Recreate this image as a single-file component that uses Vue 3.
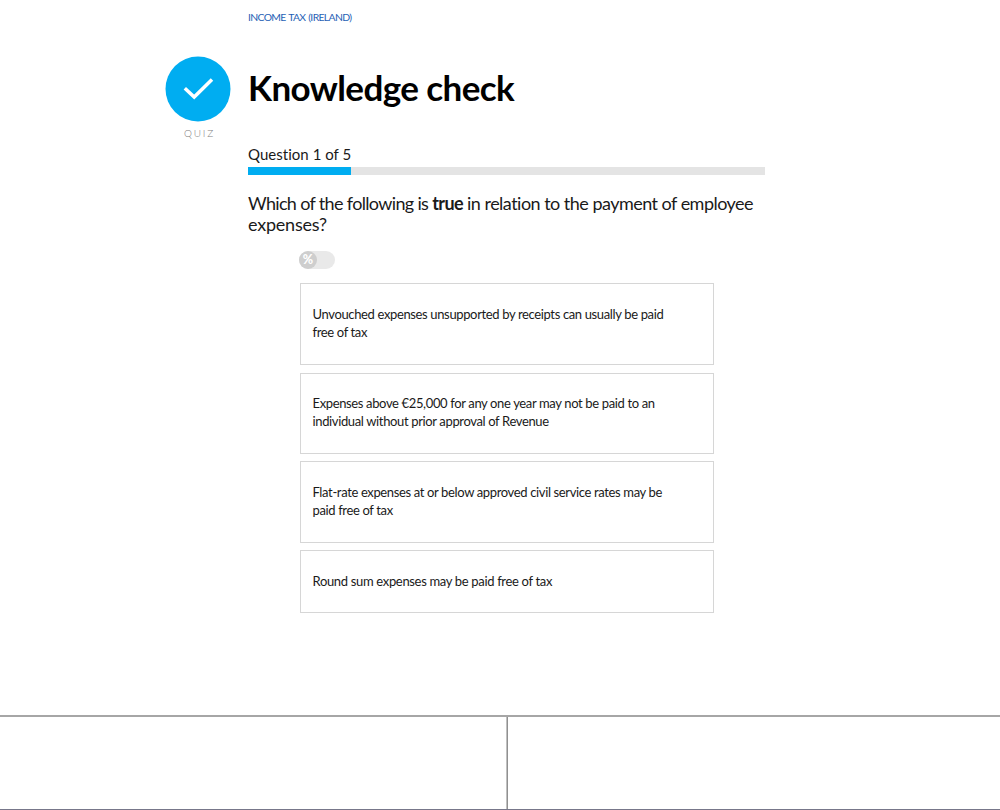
<script setup>
const course = 'INCOME TAX (IRELAND)'
const current = 1
const total = 5
const answers = [
  { id: 'a', lines: ['Unvouched expenses unsupported by receipts can usually be paid', 'free of tax'] },
  { id: 'b', lines: ['Expenses above €25,000 for any one year may not be paid to an', 'individual without prior approval of Revenue'] },
  { id: 'c', lines: ['Flat-rate expenses at or below approved civil service rates may be', 'paid free of tax'] },
  { id: 'd', lines: ['Round sum expenses may be paid free of tax'] }
]
</script>

<template>
  <div class="page">
    <main class="quiz">
      <aside class="badge">
        <svg class="badge-icon" viewBox="0 0 66 66" width="66" height="66">
          <circle cx="33" cy="33" r="32.5" fill="#00adf1" />
          <path d="M19.8 32.2 L29.2 41 L47 23.4" fill="none" stroke="#fff" stroke-width="3.5" />
        </svg>
        <span class="badge-label">QUIZ</span>
      </aside>
      <section class="content">
        <a class="course">{{ course }}</a>
        <h1 class="title">Knowledge check</h1>
        <div class="counter">Question {{ current }} of {{ total }}</div>
        <div class="progress">
          <div class="progress-fill" :style="{ width: (current / total) * 100 + '%' }"></div>
        </div>
        <p class="question">
          <span class="line"><span class="lead">Which of the following is </span><b>true</b> in relation to the payment of employee</span>
          <span class="line last">expenses?</span>
        </p>
        <div class="toggle"><span class="knob">%</span></div>
        <div class="answers">
          <div v-for="a in answers" :key="a.id" class="answer" :class="'answer-' + a.id">
            <span v-for="(l, i) in a.lines" :key="i" class="line">{{ l }}</span>
          </div>
        </div>
      </section>
    </main>
    <footer class="panels">
      <div class="panel left"></div>
      <div class="panel right"></div>
    </footer>
  </div>
</template>

<style>
body { margin: 0; background: #fff; }
</style>

<style scoped>
.page {
  height: 810px;
  display: flex;
  flex-direction: column;
  overflow: hidden;
  background: #fff;
  color: #1a1a1a;
  font-family: Lato, "Liberation Sans", sans-serif;
  font-variant-ligatures: none;
}
.quiz {
  flex: 1;
  display: flex;
  padding-left: 165px;
}
.badge {
  width: 66px;
  margin-right: 17px;
  padding-top: 56px;
  display: flex;
  flex-direction: column;
  align-items: center;
}
.badge-icon { display: block; }
.badge-label {
  margin-top: 4px;
  padding-left: 3px;
  font-size: 10px;
  line-height: 14px;
  font-weight: 300;
  letter-spacing: 1.8px;
  color: #808080;
}
.content { width: 517px; }
.course {
  display: block;
  margin-top: 10px;
  font-size: 10.4px;
  line-height: 14px;
  letter-spacing: -0.65px;
  word-spacing: 0.8px;
  color: #1f5fb5;
}
.title {
  margin: 41px 0 0;
  font-size: 35px;
  line-height: 44px;
  font-weight: 700;
  letter-spacing: -0.6px;
  color: #000;
  white-space: nowrap;
}
.counter {
  margin-top: 35px;
  font-size: 15px;
  line-height: 20px;
  letter-spacing: 0.03px;
}
.progress {
  margin-top: 3px;
  height: 8px;
  background: #e4e4e4;
}
.progress-fill {
  height: 100%;
  background: #00adf1;
}
.question {
  margin: 18px 0 0;
  font-size: 18px;
  line-height: 21px;
  letter-spacing: -0.52px;
}
.lead { letter-spacing: -0.66px; }
.last { letter-spacing: -0.22px; }
.question b { letter-spacing: -0.6px; }
.line {
  display: block;
  white-space: nowrap;
}
.toggle {
  width: 36px;
  height: 18px;
  margin: 16px 0 0 51px;
  border-radius: 9px;
  background: #e9e9e9;
}
.knob {
  display: block;
  width: 18px;
  height: 18px;
  border-radius: 50%;
  background: #cecece;
  color: #fff;
  font-size: 12.5px;
  font-weight: 900;
  line-height: 18px;
  text-align: center;
}
.answers {
  width: 414px;
  margin: 14px 0 0 52px;
}
.answer {
  box-sizing: border-box;
  height: 82px;
  margin-bottom: 7px;
  padding: 22px 11.5px 0;
  border: 1px solid #d6d6d6;
  font-size: 13px;
  line-height: 17.5px;
  letter-spacing: -0.36px;
}
.answer-a { margin-bottom: 8px; }
.answer-b {
  height: 81px;
  padding-top: 21px;
}
.answer-d {
  height: 63px;
  letter-spacing: -0.33px;
}
.panels {
  box-sizing: border-box;
  height: 95px;
  display: flex;
  border-top: 2px solid #a6a6a6;
  border-bottom: 1px solid #77778a;
}
.left {
  width: 506px;
  border-right: 1px solid #c0c0c0;
}
.right {
  flex: 1;
  border-left: 1px solid #909090;
}
</style>
